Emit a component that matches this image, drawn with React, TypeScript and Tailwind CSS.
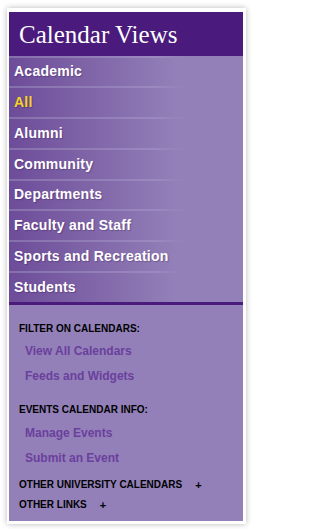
const views = [
  'Academic',
  'All',
  'Alumni',
  'Community',
  'Departments',
  'Faculty and Staff',
  'Sports and Recreation',
  'Students',
];

function NavRow({ label, active }: { label: string; active?: boolean }) {
  return (
    <li className="flex flex-col h-[30.75px] bg-[linear-gradient(to_right,#6d4c99_0%,#9380b8_71%,#9380b8_100%)]">
      <div className="h-[2px] bg-[linear-gradient(to_right,#8570ab_0%,#9b89c0_62%,#9380b8_76%)]" />
      <a
        href="#"
        className={`flex-1 flex items-center pl-[5px] text-[14px] font-bold tracking-[0.25px] [text-shadow:1px_1px_1px_rgba(40,10,70,0.3)] ${
          active ? 'text-[#f4d22a]' : 'text-white'
        }`}
      >
        {label}
      </a>
    </li>
  );
}

function SideLink({ label }: { label: string }) {
  return (
    <a href="#" className="block pl-[16px] text-[12px] font-bold leading-[25px] text-[#6a3f9d]">
      {label}
    </a>
  );
}

function Heading({ label, plus }: { label: string; plus?: boolean }) {
  return (
    <div className="flex items-center h-[12px] pl-[10px] text-[10px] leading-[12px] font-bold uppercase text-black">
      <span>{label}</span>
      {plus && <span className="ml-[13px] text-[11px]">+</span>}
    </div>
  );
}

export default function App() {
  return (
    <div className="min-h-screen bg-white pt-[8px] pl-[7px] font-['Liberation_Sans',Arial,sans-serif]">
      <div className="w-[239px] bg-white pt-[4px] pl-[2px] pr-[3px] pb-[3px] shadow-[0_0_6px_rgba(0,0,0,0.28)]">
        {/* Header */}
        <div className="h-[43.5px] bg-[#4a1b7c] flex items-center pl-[10px]">
          <h2 className="font-['Liberation_Serif','Times_New_Roman',serif] text-[25px] leading-none text-white pt-[1px]">
            Calendar Views
          </h2>
        </div>

        {/* Views */}
        <ul>
          {views.map((v) => (
            <NavRow key={v} label={v} active={v === 'All'} />
          ))}
        </ul>
        <div className="h-[3px] bg-[#4a1b7c]" />

        {/* Lower panel */}
        <div className="bg-[#9380b8] pt-[18px] pb-[10px]">
          <Heading label="Filter on Calendars:" />
          <div className="mt-[4.5px]">
            <SideLink label="View All Calendars" />
            <SideLink label="Feeds and Widgets" />
          </div>
          <div className="mt-[14.5px]">
            <Heading label="Events Calendar Info:" />
          </div>
          <div className="mt-[5.5px]">
            <SideLink label="Manage Events" />
            <SideLink label="Submit an Event" />
          </div>
          <div className="mt-[7.5px] flex flex-col gap-[8px]">
            <Heading label="Other University Calendars" plus />
            <Heading label="Other Links" plus />
          </div>
        </div>
      </div>
    </div>
  );
}
